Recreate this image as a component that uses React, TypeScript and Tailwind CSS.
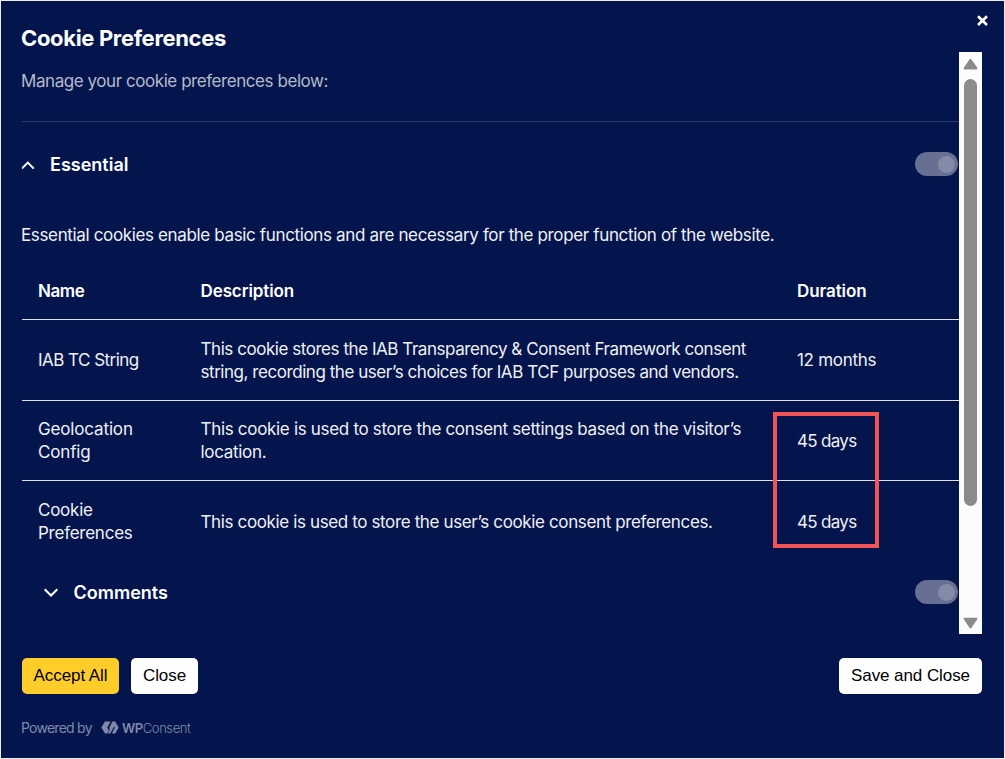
import React, { useState } from 'react';

interface CookieRow {
  name: string;
  description: string;
  duration: string;
  // per-row height and letter spacing
  row: string;
  nameClass: string;
  descClass: string;
  durationClass: string;
}

const cookies: CookieRow[] = [
  {
    name: 'IAB TC String',
    description:
      'This cookie stores the IAB Transparency & Consent Framework consent string, recording the user’s choices for IAB TCF purposes and vendors.',
    duration: '12 months',
    row: 'h-[81px] border-b border-[#dfe2e0]',
    nameClass: 'tracking-[-0.53px]',
    descClass: 'pt-px tracking-[-0.45px]',
    durationClass: 'tracking-[-0.3px]',
  },
  {
    name: 'Geolocation Config',
    description: 'This cookie is used to store the consent settings based on the visitor’s location.',
    duration: '45 days',
    row: 'h-[80px] border-b border-[#dfe2e0]',
    nameClass: 'tracking-[-0.15px]',
    descClass: 'tracking-[-0.31px]',
    durationClass: 'pt-[2px] tracking-[-0.7px]',
  },
  {
    name: 'Cookie Preferences',
    description: 'This cookie is used to store the user’s cookie consent preferences.',
    duration: '45 days',
    row: 'h-[82px]',
    nameClass: 'tracking-[-0.25px]',
    descClass: 'tracking-[-0.37px]',
    durationClass: 'tracking-[-0.7px]',
  },
];

const Toggle: React.FC = () => (
  <div className="flex h-6 w-[43px] items-center justify-end rounded-full bg-[#677092] pr-[3px]">
    <div className="size-[17px] rounded-full bg-[#838ba8]" />
  </div>
);

const Chevron: React.FC<{ open: boolean }> = ({ open }) => (
  <svg width="14" height="10" viewBox="0 0 14 10" fill="none" stroke="#fff" strokeWidth="2">
    <path d={open ? 'M0 9.4 L5.8 3.6 L11.8 9.6' : 'M0.7 2.3 L7 8.5 L13.3 2.3'} />
  </svg>
);

const Logo: React.FC = () => (
  <svg width="18" height="13" viewBox="0 0 18 13" fill="#8089a8">
    {/* left hook */}
    <path d="M4 0.4 H9.8 L6.2 6.4 L8 9.2 L6 12.6 H4 L0.3 6.5 Z" />
    {/* slash and right hook */}
    <path d="M11.4 0.4 H14.2 L17.7 6.5 L14.2 12.6 H10.8 L13.8 6.8 L13.3 5.2 L9.2 12.6 H6.6 L9 8.6 L8.2 7 Z" />
  </svg>
);

const Scrollbar: React.FC = () => (
  <div className="flex w-[23px] shrink-0 flex-col items-center bg-[#fcfcfc] pt-[6px] pb-[5px]">
    <svg width="15" height="12" viewBox="0 0 15 12" fill="#8b8b8b" stroke="#8b8b8b" strokeWidth="2" strokeLinejoin="round">
      <path d="M7.5 1.8 L1.6 10.4 H13.4 Z" />
    </svg>
    <div className="mt-[9px] h-[427px] w-[13px] rounded-full bg-[#8b8b8b]" />
    <svg className="mt-auto" width="15" height="12" viewBox="0 0 15 12" fill="#8b8b8b" stroke="#8b8b8b" strokeWidth="2" strokeLinejoin="round">
      <path d="M7.5 10.4 L1.6 1.8 H13.4 Z" />
    </svg>
  </div>
);

const App: React.FC = () => {
  const [essentialOpen, setEssentialOpen] = useState(true);

  return (
    <div className="relative flex h-[759px] w-[1005px] flex-col overflow-hidden border border-[#eceeeb] bg-[#04154e] pr-[22px] pl-[21px] font-['Inter',sans-serif] text-[#f0f1f4]">
      {/* Header */}
      <header className="flex h-[51px] shrink-0 justify-between">
        <h2 className="-ml-px pt-[23px] text-[22px] leading-7 font-bold tracking-[-0.34px] whitespace-nowrap text-white">Cookie Preferences</h2>
        <button aria-label="Close" className="mt-[14px] -mr-[6px] h-[11px]">
          <svg width="11" height="11" viewBox="0 0 11 11" stroke="#fff" strokeWidth="2.6">
            <path d="M1 1.3 L10 10 M10 1.3 L1 10" />
          </svg>
        </button>
      </header>

      {/* Scrollable preferences */}
      <main className="flex h-[582px] shrink-0">
        <div className="w-[937px]">
          <div className="h-[70px] border-b border-[#2d3c6b] pt-[17px]">
            <p className="-ml-px text-[17px] leading-6 tracking-[-0.44px] text-[#b5bac9]">Manage your cookie preferences below:</p>
          </div>

          <div className="flex h-[84px] items-center justify-between pr-px">
            <button className="flex items-center gap-[14px]" onClick={() => setEssentialOpen(!essentialOpen)}>
              <Chevron open={essentialOpen} />
              <span className="pt-px text-[18px] font-semibold text-white">Essential</span>
            </button>
            <Toggle />
          </div>

          {essentialOpen && (
            <>
              <p className="-ml-px flex h-[57px] items-center pt-[2px] text-[17px] tracking-[-0.355px] whitespace-nowrap">
                Essential cookies enable basic functions and are necessary for the proper function of the website.
              </p>
              <div className="text-[17px] leading-[23px]">
                <div className="grid h-[57px] grid-cols-[162.5px_596.5px_162px] items-center border-b border-[#dfe2e0] pl-4 font-semibold tracking-[-0.1px] text-white">
                  <div className="tracking-[-0.4px]">Name</div>
                  <div>Description</div>
                  <div>Duration</div>
                </div>
                {cookies.map((c) => (
                  <div key={c.name} className={`grid grid-cols-[162.5px_596.5px_162px] items-center pl-4 ${c.row}`}>
                    <div className={`pr-10 ${c.nameClass}`}>{c.name}</div>
                    <div className={`pr-8 ${c.descClass}`}>{c.description}</div>
                    <div className={c.durationClass}>{c.duration}</div>
                  </div>
                ))}
              </div>
            </>
          )}

          <div className="flex h-[58px] items-center justify-between pr-px pl-[22px]">
            <button className="flex items-center gap-[15.5px]">
              <Chevron open={false} />
              <span className="text-[18px] font-semibold text-white">Comments</span>
            </button>
            <Toggle />
          </div>
        </div>
        <Scrollbar />
      </main>

      {/* Actions */}
      <footer className="pt-6">
        <div className="flex gap-3 font-['Liberation_Sans',sans-serif] text-[17px] leading-9 tracking-[-0.08px] text-black">
          <button className="h-9 w-[97px] rounded-[5px] bg-[#ffcd2a]">Accept All</button>
          <button className="h-9 w-[67px] rounded-[5px] bg-white">Close</button>
          <button className="ml-auto h-9 w-[143px] rounded-[5px] bg-white">Save and Close</button>
        </div>
        <div className="flex items-center pt-[23px] text-[#8089a8]">
          <span className="-ml-px w-[80px] text-[14px] leading-5 tracking-[-0.75px] whitespace-nowrap">Powered by</span>
          <Logo />
          <span className="pt-px pl-[3px] text-[13px] leading-5 font-light tracking-[-0.42px]">
            <b className="font-semibold">WP</b>Consent
          </span>
        </div>
      </footer>

      {/* Highlight around the changed durations */}
      <div className="pointer-events-none absolute top-[411px] left-[772px] h-[136px] w-[106px] border-4 border-[#f15454]" />
    </div>
  );
};

export default App;
